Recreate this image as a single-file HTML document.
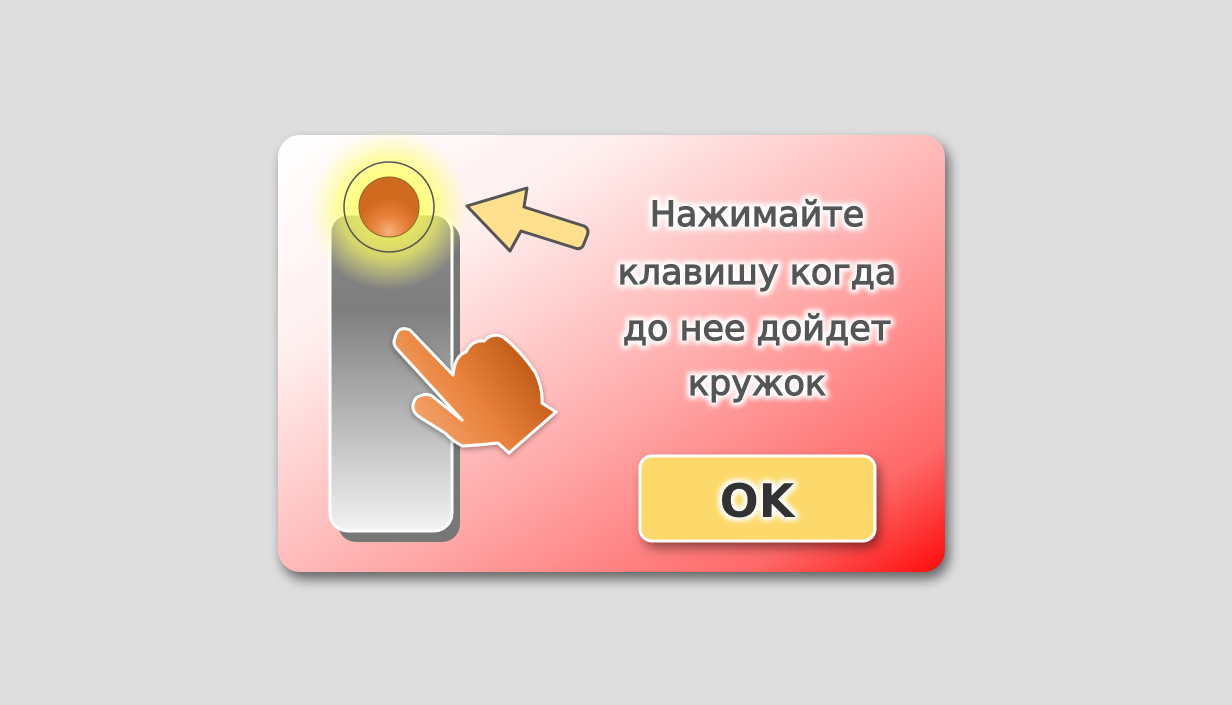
<!DOCTYPE html>
<html><head><meta charset="utf-8"><style>
html,body{margin:0;padding:0;background:#dedede;width:1232px;height:705px;overflow:hidden}
svg{display:block}
</style></head><body>
<svg width="1232" height="705" viewBox="0 0 1232 705" xmlns="http://www.w3.org/2000/svg">
<defs>
<linearGradient id="card" x1="0" y1="0" x2="1" y2="1">
<stop offset="0" stop-color="#ffffff"/><stop offset="0.25" stop-color="#fff0f0"/><stop offset="0.55" stop-color="#ffb0b0"/><stop offset="0.85" stop-color="#ff6a6a"/><stop offset="1" stop-color="#ff0a0a"/></linearGradient>
<linearGradient id="pill" x1="0" y1="214" x2="0" y2="531" gradientUnits="userSpaceOnUse">
<stop offset="0" stop-color="#8a8a8a"/><stop offset="0.3" stop-color="#7e7e7e"/><stop offset="1" stop-color="#f2f2f2"/></linearGradient>
<radialGradient id="glow" cx="389" cy="210" r="80" gradientUnits="userSpaceOnUse">
<stop offset="0" stop-color="#ffff50" stop-opacity="0.95"/><stop offset="0.6" stop-color="#ffff60" stop-opacity="0.65"/><stop offset="1" stop-color="#ffff80" stop-opacity="0"/></radialGradient>
<radialGradient id="ball" cx="389" cy="232" r="34" gradientUnits="userSpaceOnUse">
<stop offset="0" stop-color="#f7b07a"/><stop offset="0.5" stop-color="#e8803a"/><stop offset="1" stop-color="#d06a1e"/></radialGradient>
<linearGradient id="hand" x1="400" y1="440" x2="540" y2="340" gradientUnits="userSpaceOnUse">
<stop offset="0" stop-color="#f5b07f"/><stop offset="0.5" stop-color="#e8813a"/><stop offset="1" stop-color="#b4500e"/></linearGradient>
<filter id="sh" x="-20%" y="-20%" width="140%" height="140%"><feGaussianBlur stdDeviation="6"/></filter>
<filter id="tglow" x="-20%" y="-30%" width="140%" height="160%"><feMorphology operator="dilate" radius="2" in="SourceAlpha" result="d"/><feGaussianBlur in="d" stdDeviation="3" result="b"/><feFlood flood-color="#fff"/><feComposite in2="b" operator="in" result="w"/><feMerge><feMergeNode in="w"/><feMergeNode in="w"/><feMergeNode in="SourceGraphic"/></feMerge></filter>
<filter id="hs"><feDropShadow dx="0" dy="2" stdDeviation="3" flood-color="#000" flood-opacity="0.35"/></filter>
</defs>
<rect x="282" y="142" width="667" height="437" rx="22" fill="#000" opacity="0.55" filter="url(#sh)"/>
<rect x="278" y="135" width="667" height="437" rx="22" fill="url(#card)"/>
<rect x="338" y="222" width="122" height="320" rx="18" fill="#777"/>
<rect x="330" y="214" width="122" height="317" rx="18" fill="url(#pill)" stroke="#fff" stroke-width="3"/>
<circle cx="389" cy="210" r="80" fill="url(#glow)"/>
<circle cx="389" cy="207" r="45" fill="none" stroke="#555" stroke-width="1.5"/>
<circle cx="389" cy="207" r="30" fill="url(#ball)" stroke="#8a6a30" stroke-width="1"/>
<path d="M467,206 L527,188 L524,207 L584,226 Q590,229 587,236 L583,246 Q580,250 575,248 L521,231 L510,251 Z" fill="#ffe08f" stroke="#555" stroke-width="3" stroke-linejoin="round"/>
<g filter="url(#hs)">
<path d="M395,338 Q398,325 410,330 L453,375 Q455,355 466,352 Q472,340 484,341 Q492,332 503,337 Q520,350 535,372 Q543,388 542,403 L556,412 L509,453 L498,443 Q480,445 463,446 Q455,443 445,433 L421,418 Q408,410 416,398 Q425,392 432,396 L462,420 L398,350 Q392,344 395,338 Z" fill="url(#hand)" stroke="#fff" stroke-width="3" stroke-linejoin="round"/>
</g>
<g filter="url(#tglow)" font-family="'Comic Sans MS','DejaVu Sans','Liberation Sans',sans-serif" fill="#555" stroke="#555" stroke-width="1.2" text-anchor="middle" font-size="35">
<text x="757" y="226">Нажимайте</text>
<text x="757" y="284">клавишу когда</text>
<text x="757" y="340">до нее дойдет</text>
<text x="757" y="395">кружок</text>
</g>
<rect x="644" y="462" width="235" height="85" rx="12" fill="#000" opacity="0.5" filter="url(#sh)"/>
<rect x="640" y="456" width="235" height="85" rx="12" fill="#fdd86a" stroke="#fff" stroke-width="3"/>
<text x="757" y="517" text-anchor="middle" filter="url(#tglow)" font-family="'Comic Sans MS','DejaVu Sans','Liberation Sans',sans-serif" font-weight="bold" font-size="46" fill="#333">OK</text>
</svg>
</body></html>
